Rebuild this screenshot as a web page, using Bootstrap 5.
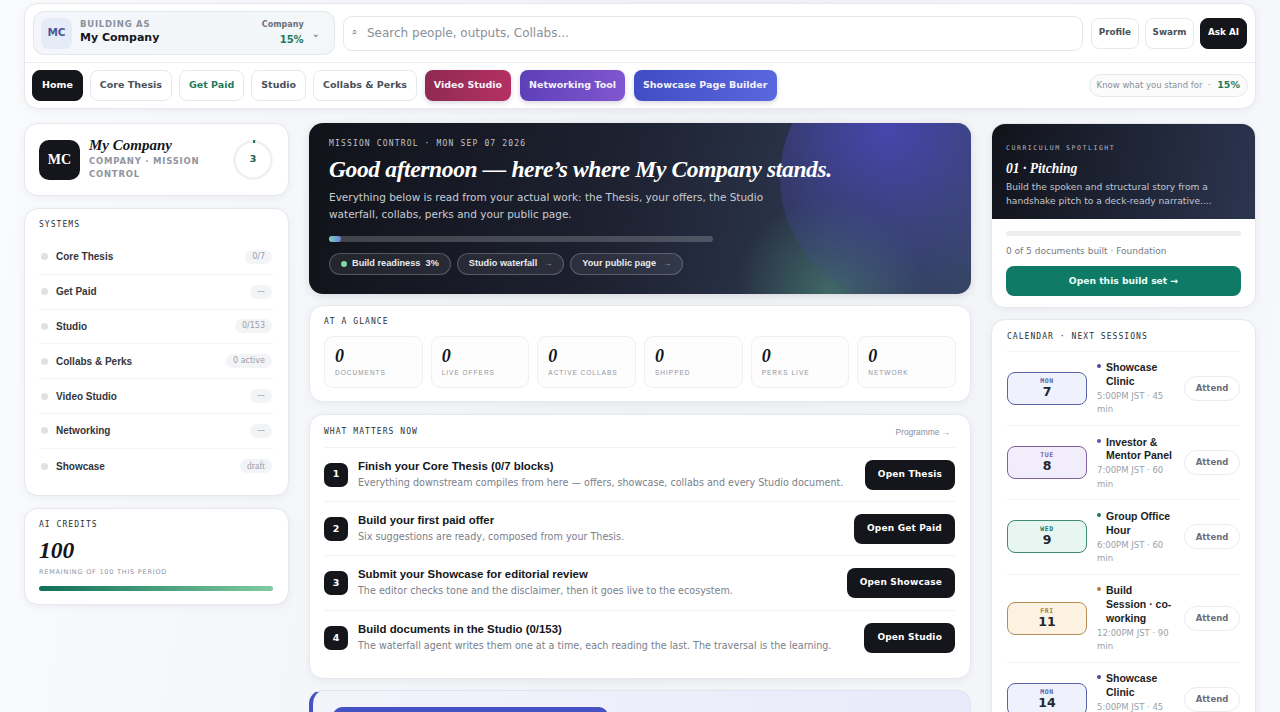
<!DOCTYPE html>
<html lang="en">
<head>
  <meta charset="UTF-8" />
  <meta name="viewport" content="width=device-width, initial-scale=1.0"/>
  <title>Mission Control</title>
  <link href="https://cdn.jsdelivr.net/npm/bootstrap@5.3.2/dist/css/bootstrap.min.css" rel="stylesheet">
  <style>
    html, body { height: 712px; overflow: hidden; }
    body {
      background: linear-gradient(100deg, #fafbfd 0%, #f1f2f6 50%, #f7f8fb 100%);
      font-family: "DejaVu Sans", sans-serif;
      color: #14161b;
    }
    .mono { font-family: "DejaVu Sans Mono", "Liberation Mono", monospace; }
    .serif { font-family: "Liberation Serif", serif; font-style: italic; font-weight: 700; }

    .shell { padding: 3px 24px 0; }
    .panel {
      background: #fff;
      border: 1px solid #e6e8ed;
      border-radius: 14px;
      box-shadow: 0 2px 8px rgba(20, 24, 40, .05);
    }

    /* top bar */
    .topbar { height: 106px; margin-bottom: 14px; }
    .toprow { height: 59px; padding: 0 8px 0 8px; border-bottom: 1px solid #eceef1; }
    .navrow { height: 44px; padding: 0 7px; }
    .org-switch {
      width: 302px; height: 44px; padding: 0 14px 0 7px;
      background: linear-gradient(90deg, #f4f6fb, #f3f7f8);
      border: 1px solid #e4e7ec; border-radius: 11px;
    }
    .org-tile {
      width: 31px; height: 31px; border-radius: 8px; background: #e6ebf8;
      color: #4a5a94; font-size: 10.5px; font-weight: 700;
    }
    .org-who { padding-bottom: 2px; }
    .org-eyebrow { font-size: 8.5px; letter-spacing: .09em; color: #8b909b; font-weight: 700; line-height: 11px; }
    .org-name { font-size: 11px; font-weight: 700; line-height: 15px; color: #14161b; }
    .org-score { margin-right: 10px; }
    .org-kind { font-size: 8px; color: #6a707c; font-weight: 700; line-height: 12px; margin-bottom: 2px; }
    .org-pct { font-size: 10px; color: #1f7a5c; font-weight: 700; line-height: 14px; }
    .org-chev { font-size: 10px; color: #6a707c; margin-left: -2px; }
    .searchbox {
      height: 35px; padding: 0 8px; margin: 0 8px 0 8px;
      border: 1px solid #e4e7ec; border-radius: 9px; background: #fff;
      font-size: 12px; color: #8a8f99;
    }
    .searchbox .glass { font-size: 9px; width: 15px; color: #6a707c; }
    .tbtn {
      height: 31px; padding: 0 7px; border: 1px solid #e6e8ed; border-radius: 8px; background: #fff;
      font-size: 8.8px; font-weight: 700; color: #4a4f59;
    }
    .tbtn.dark { background: #14161b; color: #fff; border-color: #14161b; }
    .top-actions { gap: 5.5px; }
    .navlinks { gap: 7px; }
    .navlink {
      height: 31px; padding: 0 9px; border: 1px solid #e6e8ed; border-radius: 8px; background: #fff;
      font-size: 9.5px; font-weight: 700; color: #4a4f59; white-space: nowrap;
    }
    .navlink.home { background: #14161b; color: #fff; border-color: #14161b; }
    .navlink.paid { color: #1f7a5c; }
    .navlink.grad { border: 0; color: #f4f2fa; box-shadow: 0 2px 5px rgba(40, 40, 90, .18); }
    .g-video { background: linear-gradient(100deg, #8e2a52, #b53064); margin-left: 1px; }
    .g-net { background: linear-gradient(100deg, #5c3fb8, #8257cf); margin-left: 2px; }
    .g-show { background: linear-gradient(100deg, #3f4cc4, #5a68e0); margin-left: 2px; }
    .standfor {
      height: 23px; padding: 0 7px; border: 1px solid #e6e8ed; border-radius: 12px; background: #fbfbfc;
      font-size: 8.5px; color: #8a8f99;
    }
    .standfor b { font-size: 9.5px; color: #1f7a5c; }

    /* columns */
    .cols { display: grid; grid-template-columns: 265px 662px 265px; gap: 20px; align-items: start; }
    .eyebrow {
      font-family: "DejaVu Sans Mono", monospace;
      font-size: 8px; letter-spacing: 1.05px; color: #2c3038; line-height: 10px;
    }

    /* left column */
    .left-col { gap: 12px; }
    .idcard { height: 73px; padding: 0 15px 0 14px; }
    .idlogo {
      width: 41px; height: 40px; border-radius: 10px; background: #14161b; color: #fff;
      font-family: "Liberation Serif", serif; font-weight: 700; font-size: 14px; margin-right: 9px;
    }
    .idname { font-size: 15px; line-height: 18px; color: #14161b; margin-bottom: 1px; margin-top: -3px; }
    .idsub { font-size: 8.5px; font-weight: 700; letter-spacing: .09em; color: #8f94a0; line-height: 13px; }
    .ringbox { width: 40px; height: 40px; font-size: 9.5px; font-weight: 700; color: #1f5f4c; }
    .ringbox span { position: absolute; inset: 0; display: flex; align-items: center; justify-content: center; }
    .syscard { height: 288px; padding: 11px 15px 0 14px; }
    .systitle { margin-bottom: 10px; }
    .sysrow { height: 34.8px; border-bottom: 1px solid #f2f3f5; padding: 0 1px 0 2px; }
    .sysrow:last-child { border-bottom: 0; }
    .sysdot { width: 7px; height: 7px; border-radius: 50%; background: #dfe1e5; margin-right: 8px; }
    .syslabel { font-family: "Liberation Sans", sans-serif; font-weight: 700; font-size: 10px; color: #33363d; }
    .syschip {
      height: 14px; padding: 0 7px; border-radius: 7px; background: #f3f4f6; color: #9a9fa8;
      font-size: 8px; line-height: 14px;
    }
    .syschip.draft { font-family: "Liberation Serif", serif; font-size: 9.5px; background: #f1f4f9; }
    .credcard { height: 97px; padding: 11px 15px 0 14px; }
    .credval { font-size: 23.5px; line-height: 26px; margin-top: 7px; color: #14161b; }
    .credsub { font-size: 6.5px; letter-spacing: .12em; color: #8f94a0; margin-top: 5px; line-height: 9px; }
    .credbar { height: 5px; border-radius: 3px; margin-top: 9px; background: linear-gradient(90deg, #0f6f58, #7fcb9f); }

    /* hero */
    .hero {
      position: relative; height: 171px; padding: 15px 20px; border-radius: 14px; overflow: hidden; color: #fff;
      background:
        radial-gradient(circle at 521px 168px, rgba(90, 170, 130, .42), rgba(90, 170, 130, 0) 95px),
        linear-gradient(100deg, #11131a 0%, #1d2130 45%, #364562 100%);
      box-shadow: 0 2px 8px rgba(20, 24, 40, .12);
    }
    .hero::before {
      content: ""; position: absolute; left: 471px; top: -73px; width: 256px; height: 256px; border-radius: 50%;
      background: radial-gradient(circle at 42% 30%, rgba(72, 70, 178, .95) 0, rgba(68, 70, 160, .55) 40%, rgba(60, 70, 130, .12) 75%);
    }
    .hero > * { position: relative; }
    .hero-eyebrow { font-size: 8px; letter-spacing: 1.16px; color: #bfc3cc; line-height: 10px; margin-top: 1px; }
    .hero-title { font-size: 23.5px; line-height: 28px; margin: 6px 0 6px; letter-spacing: -.37px; white-space: nowrap; }
    .hero-copy { font-size: 10.5px; line-height: 17px; color: #c9ccd4; width: 445px; }
    .hero-track { width: 384px; height: 6px; border-radius: 3px; background: rgba(255, 255, 255, .2); margin: 13px 0 11px; }
    .hero-fill { height: 6px; border-radius: 3px; background: linear-gradient(90deg, #7fd0b8, #6a7fe0); }
    .hero-chips { gap: 6px; }
    .hero-chip {
      height: 22px; padding: 0 11px; border: 1px solid rgba(255, 255, 255, .22); border-radius: 11px;
      background: rgba(255, 255, 255, .07);
      font-family: "Liberation Sans", sans-serif; font-size: 9.2px; font-weight: 700; color: #e8eaef; white-space: nowrap;
    }
    .hero-chip i { font-style: normal; font-weight: 400; font-size: 8px; color: #a8adb8; margin-left: 7px; }
    .hero-dot { width: 6px; height: 6px; border-radius: 50%; background: #7fdca8; margin-right: 5px; }

    /* glance */
    .glance { height: 97px; margin-top: 11px; padding: 11px 14px 0; }
    .glance-grid { display: grid; grid-template-columns: repeat(6, 1fr); gap: 8px; margin-top: 9px; }
    .gtile { height: 52px; border: 1px solid #eef0f3; border-radius: 9px; padding: 7px 10px; background: #fdfdfe; }
    .gnum { font-size: 18px; line-height: 24px; color: #14161b; }
    .glabel { font-family: "Liberation Sans", sans-serif; font-size: 6.5px; letter-spacing: 1px; color: #8f94a0; line-height: 10px; }

    /* matters */
    .matters { height: 265px; margin-top: 12px; padding: 0 15px 0 14px; }
    .mhead { height: 33px; padding-top: 2px; border-bottom: 1px solid #f1f2f4; }
    .mlink { font-family: "Liberation Sans", sans-serif; font-size: 8.4px; color: #8a8f99; padding-right: 5px; }
    .mrow { height: 54.2px; border-bottom: 1px solid #f1f2f4; }
    .mrow:last-child { border-bottom: 0; }
    .mnum {
      width: 24px; height: 24px; border-radius: 7px; background: #14161b; color: #fff;
      font-size: 9.5px; font-weight: 700; margin-right: 10px;
    }
    .mtitle { font-family: "Liberation Sans", sans-serif; font-size: 11.4px; font-weight: 700; line-height: 15px; color: #14161b; }
    .mcopy { font-size: 9.6px; line-height: 14px; color: #7b808a; margin-top: 2px; white-space: nowrap; }
    .mbtn {
      height: 30px; padding: 0 13px; border-radius: 8px; background: #14161b; color: #fff;
      font-size: 9px; font-weight: 700; letter-spacing: .02em;
    }
    .promo {
      height: 60px; margin-top: 11px; padding: 16px 20px; border: 1px solid #e1e3f3; border-left: 4px solid #4452c4;
      border-radius: 14px; background: linear-gradient(90deg, #f3f3fb, #e9eafa);
    }
    .promo-btn { width: 275px; height: 40px; border-radius: 9px; background: #4452c4; }

    /* right column */
    .spot { height: 185px; overflow: hidden; }
    .spot-top { height: 95px; padding: 20px 14px 0; color: #fff; background: linear-gradient(100deg, #11131a, #2c3550); }
    .spot-eyebrow { font-size: 6.5px; letter-spacing: 1.55px; color: #b4b9c4; line-height: 9px; }
    .spot-title { font-size: 13.6px; line-height: 18px; margin-top: 7px; }
    .spot-copy { font-size: 9.15px; line-height: 14px; color: #c2c6cf; margin-top: 2px; white-space: nowrap; }
    .spot-body { padding: 12px 14px 0; }
    .spot-track { height: 5px; border-radius: 3px; background: #eceef0; }
    .spot-note { font-size: 9px; line-height: 12px; color: #757a84; margin: 9px 0 9px; }
    .spot-btn {
      height: 30px; border-radius: 8px; background: #0f7a66; color: #e8fff8;
      font-size: 9.2px; font-weight: 700;
    }
    .cal { height: 440px; margin-top: 11px; padding: 12px 15px 0; overflow: hidden; }
    .calrow { padding: 8px 0; min-height: 74.4px; border-bottom: 1px solid #f2f3f5; }
    .calhead { padding-bottom: 8.5px; border-bottom: 1px solid #f2f3f5; }
    .datebox {
      width: 80px; height: 33px; border: 1px solid; border-radius: 8px; flex: none; margin-right: 10px;
      line-height: 1; text-align: center;
    }
    .datebox small { display: block; font-size: 6.5px; font-weight: 700; letter-spacing: .08em; margin-top: 4px; line-height: 8px; }
    .datebox b { display: block; font-size: 12.5px; line-height: 14px; color: #23262f; font-weight: 600; }
    .d-mon { background: #eff1fc; border-color: #5a62a8; }
    .d-mon small { color: #5a62a8; }
    .d-tue { background: #f2edfa; border-color: #80619f; }
    .d-tue small { color: #7f5fb0; }
    .d-wed { background: #e8f6f1; border-color: #3f8a74; }
    .d-wed small { color: #1f7a5c; }
    .d-fri { background: #fcf2e2; border-color: #b58d55; }
    .d-fri small { color: #a5803a; }
    .calinfo { width: 78px; flex: none; padding-top: 1.5px; }
    .caltitle { font-family: "Liberation Sans", sans-serif; font-weight: 700; font-size: 10.5px; line-height: 13.8px; color: #1c1e24; padding-left: 9px; position: relative; }
    .caltitle::before { content: ""; position: absolute; left: 0; top: 3px; width: 4px; height: 4px; border-radius: 50%; background: var(--dot); }
    .caltime { font-size: 8.5px; line-height: 13.5px; color: #9a9fa8; margin-top: 1px; }
    .attend {
      height: 25px; width: 56px; border: 1px solid #e9ebee; border-radius: 13px; background: #fff;
      font-size: 8.5px; font-weight: 700; color: #6a6f79; flex: none; margin-left: auto;
    }
  </style>
</head>
<body>
<div class="shell">

  <header class="panel topbar">
    <div class="toprow d-flex align-items-center">
      <div class="org-switch d-flex align-items-center flex-shrink-0">
        <div class="org-tile d-flex align-items-center justify-content-center me-2">MC</div>
        <div class="org-who flex-grow-1">
          <div class="org-eyebrow">BUILDING AS</div>
          <div class="org-name">My Company</div>
        </div>
        <div class="org-score text-end">
          <div class="org-kind">Company</div>
          <div class="org-pct">15%</div>
        </div>
        <span class="org-chev">&#8964;</span>
      </div>
      <div class="searchbox d-flex align-items-center flex-grow-1">
        <span class="glass">&#8981;</span>Search people, outputs, Collabs...
      </div>
      <div class="top-actions d-flex">
        <div class="tbtn d-flex align-items-center">Profile</div>
        <div class="tbtn d-flex align-items-center">Swarm</div>
        <div class="tbtn dark d-flex align-items-center">Ask AI</div>
      </div>
    </div>
    <div class="navrow d-flex align-items-center">
      <div class="navlinks d-flex flex-grow-1">
        <div class="navlink home d-flex align-items-center">Home</div>
        <div class="navlink d-flex align-items-center">Core Thesis</div>
        <div class="navlink paid d-flex align-items-center">Get Paid</div>
        <div class="navlink d-flex align-items-center">Studio</div>
        <div class="navlink d-flex align-items-center">Collabs &amp; Perks</div>
        <div class="navlink grad g-video d-flex align-items-center">Video Studio</div>
        <div class="navlink grad g-net d-flex align-items-center">Networking Tool</div>
        <div class="navlink grad g-show d-flex align-items-center">Showcase Page Builder</div>
      </div>
      <div class="standfor d-flex align-items-center gap-1">Know what you stand for &nbsp;&middot;&nbsp;<b>15%</b></div>
    </div>
  </header>

  <div class="cols">
    <aside class="left-col d-flex flex-column">
      <div class="panel idcard d-flex align-items-center">
        <div class="idlogo d-flex align-items-center justify-content-center flex-shrink-0">MC</div>
        <div class="flex-grow-1">
          <div class="idname serif">My Company</div>
          <div class="idsub">COMPANY &middot; MISSION CONTROL</div>
        </div>
        <div class="ringbox position-relative flex-shrink-0">
          <svg width="40" height="40" viewBox="0 0 40 40">
            <circle cx="20" cy="20" r="18.5" fill="none" stroke="#eef0f1" stroke-width="2.5"/>
            <path d="M20 1.5a18.5 18.5 0 0 1 2.2 .1" fill="none" stroke="#1f7a5c" stroke-width="3"/>
          </svg>
          <span>3</span>
        </div>
      </div>

      <div class="panel syscard">
        <div class="eyebrow systitle">SYSTEMS</div>
        <div id="systems"></div>
      </div>

      <div class="panel credcard">
        <div class="eyebrow">AI CREDITS</div>
        <div class="credval serif">100</div>
        <div class="credsub">REMAINING OF 100 THIS PERIOD</div>
        <div class="credbar"></div>
      </div>
    </aside>

    <main>
      <section class="hero">
        <div class="hero-eyebrow mono">MISSION CONTROL &middot; MON SEP 07 2026</div>
        <h1 class="hero-title serif">Good afternoon — here’s where My Company stands.</h1>
        <p class="hero-copy mb-0">Everything below is read from your actual work: the Thesis, your offers, the Studio waterfall, collabs, perks and your public page.</p>
        <div class="hero-track"><div class="hero-fill" style="width: 3%"></div></div>
        <div class="hero-chips d-flex">
          <div class="hero-chip d-flex align-items-center"><span class="hero-dot"></span>Build readiness &nbsp;3%</div>
          <div class="hero-chip d-flex align-items-center">Studio waterfall<i>&rarr;</i></div>
          <div class="hero-chip d-flex align-items-center">Your public page<i>&rarr;</i></div>
        </div>
      </section>

      <section class="panel glance">
        <div class="eyebrow">AT A GLANCE</div>
        <div class="glance-grid" id="glance"></div>
      </section>

      <section class="panel matters">
        <div class="mhead d-flex align-items-center justify-content-between">
          <div class="eyebrow">WHAT MATTERS NOW</div>
          <div class="mlink">Programme &rarr;</div>
        </div>
        <div id="matters"></div>
      </section>

      <section class="promo"><div class="promo-btn"></div></section>
    </main>

    <aside>
      <div class="panel spot">
        <div class="spot-top">
          <div class="spot-eyebrow mono">CURRICULUM SPOTLIGHT</div>
          <div class="spot-title serif">01 &middot; Pitching</div>
          <div class="spot-copy">Build the spoken and structural story from a<br>handshake pitch to a deck-ready narrative....</div>
        </div>
        <div class="spot-body">
          <div class="spot-track"></div>
          <div class="spot-note">0 of 5 documents built &middot; Foundation</div>
          <div class="spot-btn d-flex align-items-center justify-content-center">Open this build set &rarr;</div>
        </div>
      </div>

      <div class="panel cal">
        <div class="eyebrow calhead">CALENDAR &middot; NEXT SESSIONS</div>
        <div id="sessions"></div>
      </div>
    </aside>
  </div>
</div>

<script>
  const systems = [
    ["Core Thesis", "0/7"], ["Get Paid", "—"], ["Studio", "0/153"], ["Collabs & Perks", "0 active"],
    ["Video Studio", "—"], ["Networking", "—"], ["Showcase", "draft"]
  ];
  document.getElementById("systems").innerHTML = systems.map(([name, val]) => `
    <div class="sysrow d-flex align-items-center">
      <span class="sysdot"></span><span class="syslabel flex-grow-1">${name.replace("&", "&amp;")}</span>
      <span class="syschip ${val === "draft" ? "draft" : ""}">${val}</span>
    </div>`).join("");

  const glance = ["DOCUMENTS", "LIVE OFFERS", "ACTIVE COLLABS", "SHIPPED", "PERKS LIVE", "NETWORK"];
  document.getElementById("glance").innerHTML = glance.map(label => `
    <div class="gtile"><div class="gnum serif">0</div><div class="glabel">${label}</div></div>`).join("");

  const matters = [
    ["Finish your Core Thesis (0/7 blocks)", "Everything downstream compiles from here — offers, showcase, collabs and every Studio document.", "Open Thesis"],
    ["Build your first paid offer", "Six suggestions are ready, composed from your Thesis.", "Open Get Paid"],
    ["Submit your Showcase for editorial review", "The editor checks tone and the disclaimer, then it goes live to the ecosystem.", "Open Showcase"],
    ["Build documents in the Studio (0/153)", "The waterfall agent writes them one at a time, each reading the last. The traversal is the learning.", "Open Studio"]
  ];
  document.getElementById("matters").innerHTML = matters.map(([title, copy, btn], i) => `
    <div class="mrow d-flex align-items-center">
      <div class="mnum d-flex align-items-center justify-content-center flex-shrink-0">${i + 1}</div>
      <div class="flex-grow-1"><div class="mtitle">${title}</div><div class="mcopy">${copy}</div></div>
      <div class="mbtn d-flex align-items-center flex-shrink-0">${btn}</div>
    </div>`).join("");

  const sessions = [
    ["MON", 7, "d-mon", "#4d4a9e", "Showcase Clinic", "5:00PM JST · 45 min"],
    ["TUE", 8, "d-tue", "#6b4fa8", "Investor & Mentor Panel", "7:00PM JST · 60 min"],
    ["WED", 9, "d-wed", "#1f7a5c", "Group Office Hour", "6:00PM JST · 60 min"],
    ["FRI", 11, "d-fri", "#b5792f", "Build Session · co-working", "12:00PM JST · 90 min"],
    ["MON", 14, "d-mon", "#4d4a9e", "Showcase Clinic", "5:00PM JST · 45 min"]
  ];
  document.getElementById("sessions").innerHTML = sessions.map(([day, num, cls, dot, title, time]) => `
    <div class="calrow d-flex align-items-center">
      <div class="datebox ${cls}"><small class="mono">${day}</small><b>${num}</b></div>
      <div class="calinfo">
        <div class="caltitle" style="--dot: ${dot}">${title.replace("&", "&amp;")}</div>
        <div class="caltime">${time}</div>
      </div>
      <div class="attend d-flex align-items-center justify-content-center">Attend</div>
    </div>`).join("");
</script>
<script src="https://cdn.jsdelivr.net/npm/bootstrap@5.3.2/dist/js/bootstrap.bundle.min.js"></script>
</body>
</html>
